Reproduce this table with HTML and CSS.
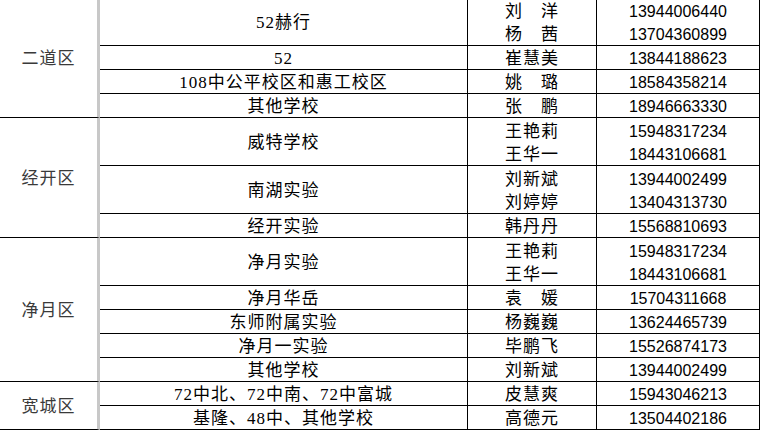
FILE: index.html
```html
<!DOCTYPE html>
<html lang="zh-CN">
<head>
<meta charset="utf-8">
<title>联系表</title>
<link rel="stylesheet" href="styles.css">
</head>
<body>
<div class="sheet">
  <div class="cell d r4">二道区</div>
  <div class="cell s">52赫行</div>
  <div class="cell n"><span>刘　洋</span><span>杨　茜</span></div>
  <div class="cell p"><span>13944006440</span><span>13704360899</span></div>
  <div class="cell s">52</div>
  <div class="cell n"><span>崔慧美</span></div>
  <div class="cell p"><span>13844188623</span></div>
  <div class="cell s">108中公平校区和惠工校区</div>
  <div class="cell n"><span>姚　璐</span></div>
  <div class="cell p"><span>18584358214</span></div>
  <div class="cell s">其他学校</div>
  <div class="cell n"><span>张　鹏</span></div>
  <div class="cell p"><span>18946663330</span></div>

  <div class="cell d r3">经开区</div>
  <div class="cell s">威特学校</div>
  <div class="cell n"><span>王艳莉</span><span>王华一</span></div>
  <div class="cell p"><span>15948317234</span><span>18443106681</span></div>
  <div class="cell s">南湖实验</div>
  <div class="cell n"><span>刘新斌</span><span>刘婷婷</span></div>
  <div class="cell p"><span>13944002499</span><span>13404313730</span></div>
  <div class="cell s">经开实验</div>
  <div class="cell n"><span>韩丹丹</span></div>
  <div class="cell p"><span>15568810693</span></div>

  <div class="cell d r5">净月区</div>
  <div class="cell s">净月实验</div>
  <div class="cell n"><span>王艳莉</span><span>王华一</span></div>
  <div class="cell p"><span>15948317234</span><span>18443106681</span></div>
  <div class="cell s">净月华岳</div>
  <div class="cell n"><span>袁　媛</span></div>
  <div class="cell p"><span>15704311668</span></div>
  <div class="cell s">东师附属实验</div>
  <div class="cell n"><span>杨巍巍</span></div>
  <div class="cell p"><span>13624465739</span></div>
  <div class="cell s">净月一实验</div>
  <div class="cell n"><span>毕鹏飞</span></div>
  <div class="cell p"><span>15526874173</span></div>
  <div class="cell s">其他学校</div>
  <div class="cell n"><span>刘新斌</span></div>
  <div class="cell p"><span>13944002499</span></div>

  <div class="cell d r2">宽城区</div>
  <div class="cell s">72中北、72中南、72中富城</div>
  <div class="cell n"><span>皮慧爽</span></div>
  <div class="cell p"><span>15943046213</span></div>
  <div class="cell s">基隆、48中、其他学校</div>
  <div class="cell n"><span>高德元</span></div>
  <div class="cell p"><span>13504402186</span></div>
</div>
</body>
</html>
```
FILE: styles.css
```css
html, body {
  margin: 0;
  padding: 0;
  background: #fff;
  overflow: hidden;
}

.sheet {
  width: 760px;
  margin-top: -2px;
  display: grid;
  grid-template-columns: 100px 368px 129px 163px;
  grid-template-rows: 48px 24px 24px 24px 48px 48px 24px 48px 24px 24px 24px 24px 24px 24px;
  color: #000;
}

.cell {
  box-sizing: border-box;
  border-bottom: 1px solid #000;
  border-right: 1px solid #000;
  display: flex;
  flex-direction: column;
  align-items: center;
  justify-content: center;
  padding-top: 2px;
  font-family: "Liberation Serif", "Noto Sans CJK SC", sans-serif;
  font-size: 17px;
  line-height: 23px;
  letter-spacing: 1px;
  white-space: nowrap;
}

.cell span {
  display: block;
  height: 23px;
}

.d {
  border-right: 3px solid #c8c8c8;
  color: #3a3a3a;
}

.r2 { grid-row: span 2; }
.r3 { grid-row: span 3; }
.r4 { grid-row: span 4; }
.r5 { grid-row: span 5; }

.p {
  font-family: "Liberation Sans", sans-serif;
  font-size: 16px;
  letter-spacing: 0;
}
```
